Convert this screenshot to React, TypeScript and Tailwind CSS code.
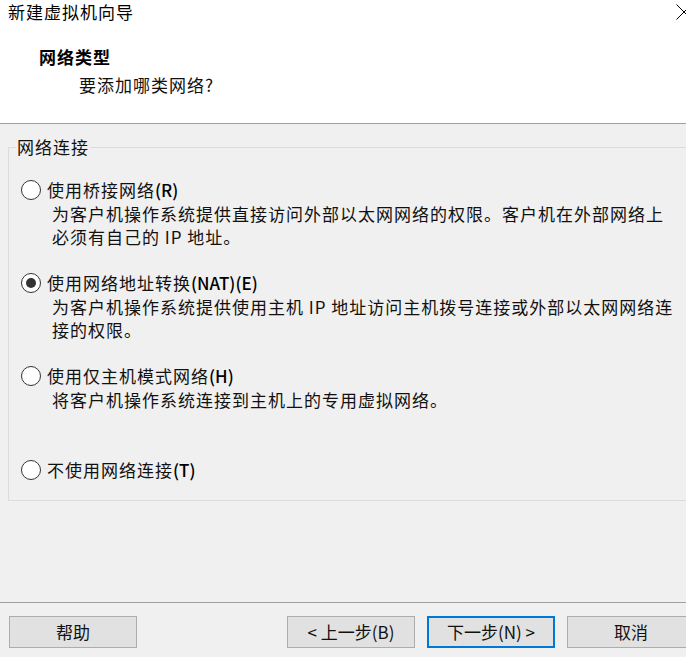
import React from "react";

const font = { fontFamily: '"Noto Sans CJK SC", "Noto Sans", sans-serif' };

function Radio({ checked }: { checked?: boolean }) {
  return (
    <span className="flex h-[20px] w-[20px] shrink-0 items-center justify-center rounded-full border border-[#333333] bg-white">
      {checked && <span className="h-[10px] w-[10px] rounded-full bg-[#333333]" />}
    </span>
  );
}

interface OptionProps {
  label: string;
  hotkey: string;
  checked?: boolean;
  lines?: string[];
  className?: string;
}

function Option({ label, hotkey, checked, lines = [], className = "" }: OptionProps) {
  return (
    <div className={className}>
      <div className="flex h-[24px] items-center gap-[6px]">
        <Radio checked={checked} />
        <span className="text-[17px] leading-[24px] tracking-[1px] text-[#111]">
          {label}
          <span className="font-medium tracking-normal text-black">{hotkey}</span>
        </span>
      </div>
      {lines.map((l) => (
        <div key={l} className="pl-[31px] text-[17px] leading-[23px] tracking-[1px] text-[#111]">
          {l}
        </div>
      ))}
    </div>
  );
}

function Button({ children, focused }: { children: React.ReactNode; focused?: boolean }) {
  return (
    <button
      className={
        "h-[32px] w-[128px] shrink-0 bg-[#e1e1e1] text-[17px] text-[#111] " +
        (focused ? "border-2 border-[#0078d7]" : "border border-[#adadad]")
      }
    >
      {children}
    </button>
  );
}

export default function App() {
  return (
    <div className="relative flex h-[657px] w-[686px] flex-col overflow-hidden bg-[#f0f0f0]" style={font}>
      <div className="relative h-[124px] shrink-0 border-b border-[#a0a0a0] bg-white">
        <div className="pl-[8px] text-[17px] leading-[24px] tracking-[1px] text-black">新建虚拟机向导</div>
        <svg className="absolute right-[-6px] top-[4px]" width="16" height="16" viewBox="0 0 16 16">
          <path d="M0.5 0.5 L15.5 15.5 M15.5 0.5 L0.5 15.5" stroke="#000" strokeWidth="1" />
        </svg>
        <div className="mt-[21px] pl-[39px] text-[17px] font-bold leading-[24px] tracking-[1px] text-black">网络类型</div>
        <div className="mt-[4px] pl-[79px] text-[17px] leading-[24px] tracking-[1px] text-[#111]">要添加哪类网络?</div>
      </div>

      <div className="flex-1">
        <fieldset className="ml-[8px] mt-[11px] h-[366px] w-[700px] border border-[#dcdcdc] pl-[12px] pt-[19px]">
          <legend className="-ml-[5px] px-[1px] text-[17px] leading-[24px] tracking-[1px] text-[#111]">网络连接</legend>
          <Option
            label="使用桥接网络"
            hotkey="(R)"
            lines={["为客户机操作系统提供直接访问外部以太网网络的权限。客户机在外部网络上", "必须有自己的 IP 地址。"]}
          />
          <Option
            className="mt-[23px]"
            label="使用网络地址转换"
            hotkey="(NAT)(E)"
            checked
            lines={["为客户机操作系统提供使用主机 IP 地址访问主机拨号连接或外部以太网网络连", "接的权限。"]}
          />
          <Option
            className="mt-[23px]"
            label="使用仅主机模式网络"
            hotkey="(H)"
            lines={["将客户机操作系统连接到主机上的专用虚拟网络。"]}
          />
          <Option className="mt-[47px]" label="不使用网络连接" hotkey="(T)" />
        </fieldset>
      </div>

      <div className="h-[55px] shrink-0 border-t border-[#a0a0a0] pt-[13px]">
        <div className="flex pl-[9px]">
          <Button>帮助</Button>
          <div className="ml-[150px] flex gap-[12px]">
            <Button>&lt; 上一步(B)</Button>
            <Button focused>下一步(N) &gt;</Button>
            <Button>取消</Button>
          </div>
        </div>
      </div>
    </div>
  );
}
